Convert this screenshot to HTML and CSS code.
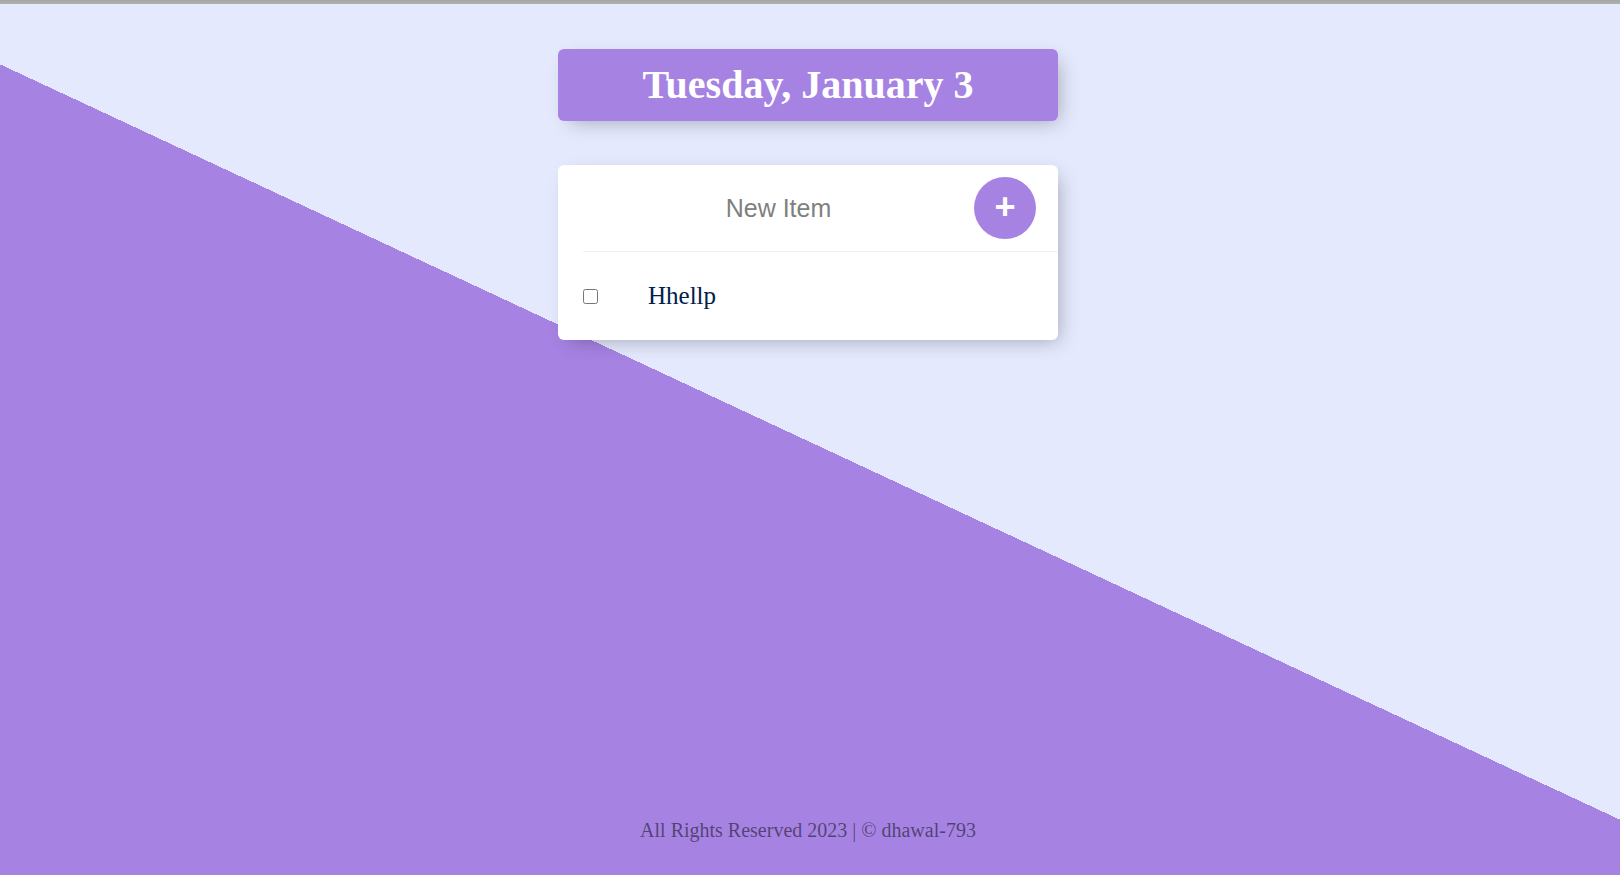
FILE: index.html
```
<!DOCTYPE html>
<html lang="en">
<head>
<meta charset="utf-8">
<title>To Do List</title>
<link rel="stylesheet" href="styles.css">
</head>
<body>
<div class="topbar"></div>
<div class="page">
  <div class="box heading">
    <h1>Tuesday, January 3</h1>
  </div>
  <div class="box list">
    <form class="item new-item" action="/" method="post">
      <input class="new-input" type="text" name="newItem" placeholder="New Item" autocomplete="off">
      <button class="add-btn" type="submit" name="list">+</button>
    </form>
    <div class="item">
      <input class="check" type="checkbox" name="checkbox">
      <p class="item-text">Hhellp</p>
    </div>
  </div>
  <footer class="footer">All Rights Reserved 2023 | © dhawal-793</footer>
</div>
</body>
</html>
```

FILE: styles.css
```
html {
  background-color: #E4E9FD;
  background-image: linear-gradient(25deg, #A683E3 50%, #E4E9FD 50%);
  background-repeat: no-repeat;
  background-size: 100% 884px;
}

body {
  margin: 0;
  font-family: "Liberation Serif", "Times New Roman", serif;
}

.topbar {
  height: 4px;
  background: linear-gradient(#a6a6a6, #b0b0b0);
}

.page {
  display: flex;
  flex-direction: column;
  align-items: center;
  min-height: 871px;
  padding-right: 4px;
  box-sizing: border-box;
}

.box {
  width: 500px;
  background: #fff;
  border-radius: 6px;
  box-shadow: 6px 6px 19px -6px rgba(0, 0, 0, 0.3);
}

.heading {
  margin-top: 45px;
  background-color: #A683E3;
  text-align: center;
}

.heading h1 {
  margin: 0;
  padding: 12px 12px;
  font-size: 40px;
  font-weight: bold;
  line-height: 48px;
  color: #fff;
}

.list {
  margin-top: 44px;
}

.item {
  min-height: 86px;
  display: flex;
  align-items: center;
  border-bottom: 1px solid #F1F1F1;
}

.item:last-child {
  border-bottom: 0;
  min-height: 88px;
}

.new-item {
  margin: 0 0 0 25px;
}

.new-input {
  width: 391px;
  height: 75px;
  padding: 0;
  border: none;
  background: transparent;
  text-align: center;
  font-family: "Liberation Sans", Arial, sans-serif;
  font-size: 25px;
  color: #333;
  outline: none;
}

.new-input::placeholder {
  color: grey;
  opacity: 1;
}

.add-btn {
  width: 62px;
  height: 62px;
  border-radius: 50%;
  border: 0;
  padding: 0 0 3px 0;
  background-color: #A683E3;
  color: #fff;
  font-family: "Liberation Sans", Arial, sans-serif;
  font-size: 36px;
  font-weight: bold;
  line-height: 1;
  display: flex;
  align-items: center;
  justify-content: center;
}

.check {
  width: 15px;
  height: 15px;
  margin: 0 25px 0 25px;
}

.item-text {
  margin: 0;
  padding: 25px;
  font-size: 25px;
  color: #00204a;
}

.footer {
  margin-top: auto;
  padding-bottom: 33px;
  font-size: 20px;
  line-height: 23px;
  color: rgba(0, 0, 0, 0.5);
  text-align: center;
}
```
